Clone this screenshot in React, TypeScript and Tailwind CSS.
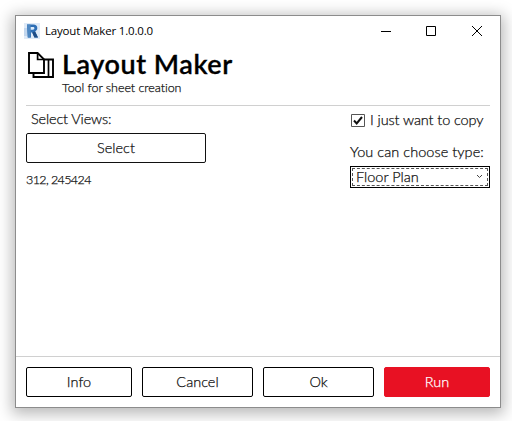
import React from "react";

function RevitLogo() {
  return (
    <svg width="16" height="16" viewBox="0 0 16 16" className="shrink-0">
      <rect width="16" height="16" fill="#dfeaf7" />
      <rect x="0" y="5" width="3" height="8" fill="#c3d7ee" />
      <path d="M3 1.500h6.300c2.600 0 4 1.300 4 3.600 0 1.700-.8 2.800-2.200 3.300L14 14.500h-3.600L8.200 9.500H7v5H3.800z" fill="#2d6eb5" />
      <path d="M3 1.500h3.500v13H3.800z" fill="#4f88c2" />
      <path d="M6.700 4h2.200c1 0 1.500.4 1.500 1.300S9.900 6.700 8.900 6.700H6.700z" fill="#dcebfa" />
      <path d="M8.200 9.500l2.200 5H14l-2.900-6.100z" fill="#1d4c86" />
    </svg>
  );
}

function SheetsIcon() {
  return (
    <svg width="28" height="28" viewBox="0 0 28 28" fill="none" stroke="#000" strokeWidth="1.900" className="shrink-0">
      <path d="M2 2h8.600l6.400 6.400V22H2z" />
      <path d="M10.600 2v6.500H17" strokeWidth="1.700" />
      <path d="M16 8.500h10V26H6.500v-4" />
      <path d="M21.500 8.500V26" strokeWidth="1.700" />
    </svg>
  );
}

function ActionButton({ label, className }: { label: string; className: string }) {
  return (
    <button className={`flex h-[30px] items-center justify-center rounded-[2px] border text-[14.500px] font-light leading-5 ${className}`}>
      <span className="[-webkit-text-stroke:0.25px]">{label}</span>
    </button>
  );
}

export default function App() {
  return (
    <div className="h-[421px] w-[512px] overflow-hidden bg-white pl-[15px] pt-[15px] font-['Lato',sans-serif] font-light text-[#111]">
      <main className="flex h-[393px] w-[486px] flex-col border border-[#8c8c8c] bg-white shadow-[0_3px_14px_3px_rgba(0,0,0,0.28)]">
        <header className="flex h-[30px] shrink-0 items-center pl-2 text-black">
          <RevitLogo />
          <span className="ml-[5px] font-['Open_Sans',sans-serif] text-[11.500px] font-normal leading-4 tracking-[-0.18px]">Layout Maker 1.0.0.0</span>
          <svg width="104" height="12" viewBox="0 0 104 12" fill="none" stroke="#000" className="mb-px ml-auto mr-[17px]">
            <path d="M2 6.500h10" />
            <path d="M47.500 1.500h9v9h-9z" />
            <path d="M93 1l10 10M103 1L93 11" />
          </svg>
        </header>

        <section className="mx-[10px] flex h-[60px] shrink-0 border-b border-[#d0d0d0] pl-px pt-[5px]">
          <SheetsIcon />
          <div className="-mt-px ml-[7px]">
            <h1 className="text-[27px] font-semibold leading-[28px] tracking-[0.55px] text-black [-webkit-text-stroke:0.3px]">Layout Maker</h1>
            <p className="mt-[2px] text-[12.500px] leading-4 tracking-[-0.05px] [-webkit-text-stroke:0.25px]">Tool for sheet creation</p>
          </div>
        </section>

        <section className="flex grow justify-between px-[10px] [-webkit-text-stroke:0.25px]">
          <div className="w-[180px] pt-[3px]">
            <p className="pl-[5px] text-[14.500px] leading-5 tracking-[-0.15px]">Select Views:</p>
            <ActionButton label="Select" className="mt-1 w-full border-[#111]" />
            <p className="mt-[9px] text-[12.500px] leading-4 tracking-[-0.6px]">312, 245424</p>
          </div>
          <div className="w-[140px] pt-1">
            <label className="flex h-5 items-center">
              <svg width="14" height="13" viewBox="0 0 14 13" fill="none" className="ml-px mt-px shrink-0">
                <path d="M.500.500h13v12H.500z" stroke="#555" />
                <path d="M3 6.500l2.700 3L11 3" stroke="#111" strokeWidth="2" />
              </svg>
              <span className="ml-[5px] whitespace-nowrap text-[14.500px] leading-5 tracking-[-0.1px]">I just want to copy</span>
            </label>
            <p className="mt-3 whitespace-nowrap text-[14.500px] leading-5 tracking-[0.05px]">You can choose type:</p>
            <div className="mt-1 h-[22px] border border-black p-px">
              <div className="flex h-full items-center justify-between border border-dashed border-[#555] pl-[3px] pr-1">
                <span className="text-[14.500px] leading-4">Floor Plan</span>
                <svg width="7" height="5" viewBox="0 0 7 5" fill="none" stroke="#444" className="mb-px">
                  <path d="M1 1l2.500 2.500L6 1" />
                </svg>
              </div>
            </div>
          </div>
        </section>

        <footer className="flex h-[51px] shrink-0 gap-[10px] border-t border-[#d0d0d0] px-[10px] pt-[10px]">
          <ActionButton label="Info" className="w-[106px] border-black" />
          <ActionButton label="Cancel" className="w-[111px] border-black" />
          <ActionButton label="Ok" className="w-[111px] border-black" />
          <ActionButton label="Run" className="w-[106px] border-[#e81123] bg-[#e81123] text-white" />
        </footer>
      </main>
    </div>
  );
}
